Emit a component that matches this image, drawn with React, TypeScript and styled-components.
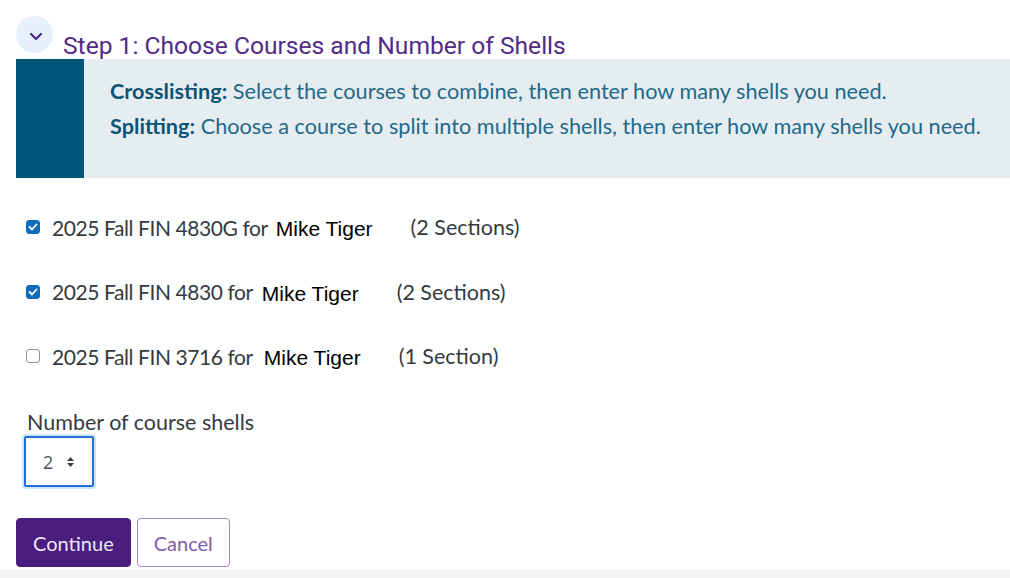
import { createGlobalStyle } from 'styled-components';
import styled from 'styled-components';

const GlobalStyle = createGlobalStyle`
  html, body {
    margin: 0;
    padding: 0;
    background: #ffffff;
  }
  body {
    font-family: Lato, "Noto Sans", sans-serif;
    color: #343a40;
  }
`;

const Page = styled.div`
  width: 1010px;
  height: 578px;
  overflow: hidden;
  display: flex;
  flex-direction: column;
`;

const Content = styled.div`
  flex: 1;
  padding: 16px 0 0 16px;
  display: flex;
  flex-direction: column;
`;

const StepHeader = styled.div`
  display: flex;
  align-items: flex-end;
  gap: 10px;
  height: 43px;
`;

const ChevronCircle = styled.span`
  width: 37px;
  height: 37px;
  border-radius: 50%;
  background: #e6f0fd;
  display: flex;
  align-items: center;
  justify-content: center;
  padding: 4px 0 0 3px;
  box-sizing: border-box;
  color: #4e2a80;
  align-self: flex-start;
`;

const StepTitle = styled.h2`
  margin: 0 0 -1px 0;
  font-family: Roboto, sans-serif;
  font-weight: 400;
  font-size: 24.6px;
  line-height: 28px;
  color: #512b85;
`;

const InfoBox = styled.div`
  display: flex;
  height: 119px;
  background: #e5edf1;
`;

const InfoBar = styled.div`
  width: 68px;
  background: #00557a;
`;

const InfoText = styled.div`
  padding: 18px 0 0 26px;
  display: flex;
  flex-direction: column;
  gap: 6px;
  font-size: 21.7px;
  line-height: 29px;
  color: #22698a;
  white-space: nowrap;
`;

const Label = styled.strong`
  font-weight: 700;
  color: #0d5474;
`;

const CourseList = styled.div`
  display: flex;
  flex-direction: column;
  gap: 36.5px;
  padding: 35px 0 0 10px;
`;

const CourseRow = styled.label`
  display: flex;
  align-items: center;
  height: 28px;
  font-size: 21px;
  color: #343a40;
  white-space: nowrap;
`;

const Check = styled.span<{ $checked: boolean }>`
  width: 14px;
  height: 14px;
  box-sizing: border-box;
  border-radius: 3px;
  margin-right: 12px;
  display: flex;
  align-items: center;
  justify-content: center;
  background: ${({ $checked }) => ($checked ? '#0f6cbf' : '#ffffff')};
  border: 1px solid ${({ $checked }) => ($checked ? '#0f6cbf' : '#8f959e')};
`;

const CourseTitle = styled.span`
  letter-spacing: -0.42px;
`;

const Name = styled.span<{ $gap: number }>`
  font-family: "Liberation Sans", Arial, sans-serif;
  font-size: 21px;
  color: #000000;
  margin-left: ${({ $gap }) => $gap}px;
  margin-right: 38px;
  position: relative;
  top: 2px;
`;

const Sections = styled.span`
  font-size: 21.5px;
`;

const ShellsBlock = styled.div`
  display: flex;
  flex-direction: column;
  padding: 38px 0 0 11px;
`;

const ShellsLabel = styled.div`
  font-size: 21.5px;
  line-height: 28px;
  color: #343a40;
`;

const NumberSelect = styled.div`
  margin-top: 0;
  margin-left: -3px;
  width: 70px;
  height: 51px;
  box-sizing: border-box;
  border: 2px solid #1f6fd6;
  border-radius: 2px;
  box-shadow: 0 0 0 2px #cfe2fb;
  display: flex;
  align-items: center;
  padding-left: 17px;
  gap: 13px;
  font-family: "Open Sans", sans-serif;
  font-size: 18px;
  color: #495057;
`;

const Buttons = styled.div`
  display: flex;
  gap: 6px;
  padding-top: 31px;
`;

const Button = styled.button<{ $primary?: boolean }>`
  height: 49px;
  box-sizing: border-box;
  padding: 0 16px;
  border-radius: 4px;
  font-family: Lato, "Noto Sans", sans-serif;
  font-size: 20px;
  background: ${({ $primary }) => ($primary ? '#4a1e7d' : '#ffffff')};
  color: ${({ $primary }) => ($primary ? '#ece6f4' : '#7d5ca8')};
  border: 1px solid ${({ $primary }) => ($primary ? '#4a1e7d' : '#9f86c0')};
  cursor: pointer;
`;

const Footer = styled.div`
  height: 8px;
  background: #f5f5f7;
`;

const courses = [
  { title: '2025 Fall FIN 4830G for', gap: 8, sections: '(2 Sections)', checked: true },
  { title: '2025 Fall FIN 4830 for', gap: 9, sections: '(2 Sections)', checked: true },
  { title: '2025 Fall FIN 3716 for', gap: 11, sections: '(1 Section)', checked: false },
];

export default function App() {
  return (
    <Page>
      <GlobalStyle />
      <Content>
        <StepHeader>
          <ChevronCircle>
            <svg width="14" height="9" viewBox="0 0 14 9" fill="none">
              <path d="M2 2 L7 7 L12 2" stroke="currentColor" strokeWidth="2.3" strokeLinecap="round" strokeLinejoin="round" />
            </svg>
          </ChevronCircle>
          <StepTitle>Step 1: Choose Courses and Number of Shells</StepTitle>
        </StepHeader>
        <InfoBox>
          <InfoBar />
          <InfoText>
            <div>
              <Label>Crosslisting:</Label> Select the courses to combine, then enter how many shells you need.
            </div>
            <div>
              <Label>Splitting:</Label> Choose a course to split into multiple shells, then enter how many shells you need.
            </div>
          </InfoText>
        </InfoBox>
        <CourseList>
          {courses.map((c) => (
            <CourseRow key={c.title}>
              <Check $checked={c.checked}>
                {c.checked && (
                  <svg width="10" height="8" viewBox="0 0 10 8" fill="none">
                    <path d="M1.5 4 L4 6.5 L8.5 1.5" stroke="#fff" strokeWidth="1.8" strokeLinecap="round" strokeLinejoin="round" />
                  </svg>
                )}
              </Check>
              <CourseTitle>{c.title}</CourseTitle>
              <Name $gap={c.gap}>Mike Tiger</Name>
              <Sections>{c.sections}</Sections>
            </CourseRow>
          ))}
        </CourseList>
        <ShellsBlock>
          <ShellsLabel>Number of course shells</ShellsLabel>
          <NumberSelect>
            2
            <svg width="9" height="12" viewBox="0 0 9 12">
              <path d="M4.5 1 L8 5 H1 Z M4.5 11 L8 7 H1 Z" fill="#343a40" />
            </svg>
          </NumberSelect>
        </ShellsBlock>
        <Buttons>
          <Button $primary>Continue</Button>
          <Button>Cancel</Button>
        </Buttons>
      </Content>
      <Footer />
    </Page>
  );
}
